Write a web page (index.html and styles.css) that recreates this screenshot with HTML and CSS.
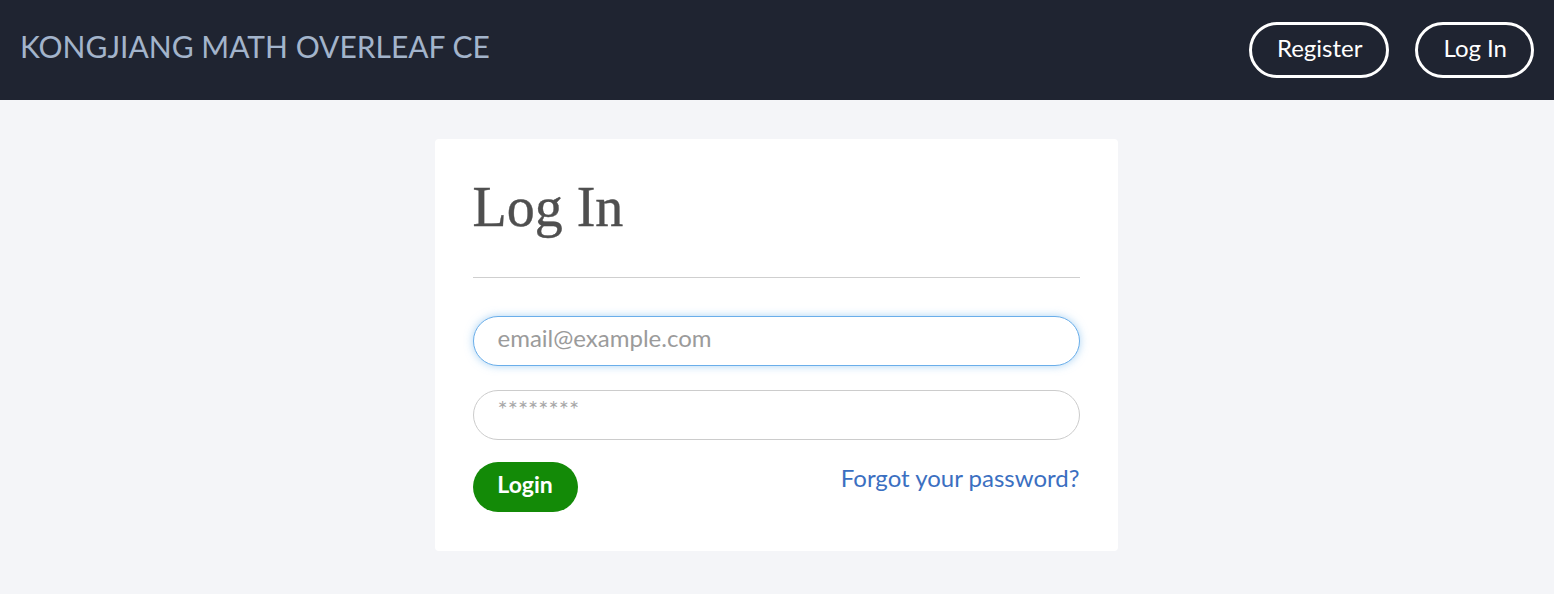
FILE: index.html
```html
<!DOCTYPE html>
<html>
<head>
<meta charset="utf-8">
<link rel="stylesheet" href="styles.css">
</head>
<body>
<header class="navbar">
  <a class="brand" href="#">KONGJIANG MATH OVERLEAF CE</a>
  <nav class="nav-actions">
    <a class="nav-btn" href="#">Register</a>
    <a class="nav-btn" href="#">Log In</a>
  </nav>
</header>
<main class="content">
  <section class="card">
    <h1 class="title">Log In</h1>
    <hr class="divider">
    <form class="form">
      <input class="field field-focus" type="email" placeholder="email@example.com">
      <input class="field field-pass" type="password" placeholder="********">
      <div class="actions">
        <button class="btn-login" type="button">Login</button>
        <a class="forgot" href="#">Forgot your password?</a>
      </div>
    </form>
  </section>
</main>
</body>
</html>
```
FILE: styles.css
```css
* { box-sizing: border-box; }
html, body { margin: 0; padding: 0; }
body {
  font-family: Lato, "Noto Sans", sans-serif;
  background: #f4f5f8;
  height: 594px;
  overflow: hidden;
}
.navbar {
  height: 100px;
  background: #1f2431;
  display: flex;
  align-items: center;
  justify-content: space-between;
  padding: 0 20px 0 20px;
}
.brand {
  color: #a3b4cb;
  font-size: 30px;
  text-decoration: none;
  margin-top: -8px;
}
.nav-actions {
  display: flex;
  gap: 26px;
}
.nav-btn {
  display: flex;
  align-items: center;
  justify-content: center;
  height: 56px;
  padding: 0 24px 6px 25px;
  border: 3px solid #fff;
  border-radius: 28px;
  color: #fff;
  font-size: 24px;
  text-decoration: none;
}
.content {
  display: flex;
  justify-content: center;
  padding-top: 39px;
}
.card {
  width: 683px;
  background: #fff;
  border-radius: 4px;
  padding: 33px 38px 39px 38px;
  transform: translateX(-1px);
}
.title {
  font-family: "Liberation Serif", "Times New Roman", serif;
  font-weight: 400;
  font-size: 56px;
  color: #4f4f4f;
  margin: 0;
  line-height: 70px;
  -webkit-text-stroke: 0.4px #4f4f4f;
}
.divider {
  border: 0;
  border-top: 1px solid #cfcfcf;
  margin: 35px 0 38px;
}
.form {
  display: flex;
  flex-direction: column;
}
.field {
  height: 50px;
  border-radius: 25px;
  border: 1px solid #cccccc;
  padding: 0 24px 7px;
  font-family: Lato, sans-serif;
  font-size: 24px;
  color: #333;
  outline: none;
  background: #fff;
}
.field::placeholder { color: #9b9b9b; }
.field-focus {
  border-color: #6aaeea;
  box-shadow: 0 0 8px rgba(102, 175, 233, 0.55);
}
.field-pass {
  margin-top: 24px;
  padding-bottom: 14px;
}
.field-pass::placeholder { color: #a8a8a8; }
.actions {
  display: flex;
  justify-content: space-between;
  align-items: flex-start;
  margin-top: 22px;
}
.btn-login {
  height: 50px;
  width: 105px;
  border: 0;
  border-radius: 25px;
  background: #138a07;
  color: #fff;
  font-family: Lato, sans-serif;
  font-weight: 700;
  font-size: 23px;
  padding: 0 0 7px;
}
.forgot {
  color: #3b6fc1;
  font-size: 24px;
  text-decoration: none;
  margin-top: 1px;
}
```
